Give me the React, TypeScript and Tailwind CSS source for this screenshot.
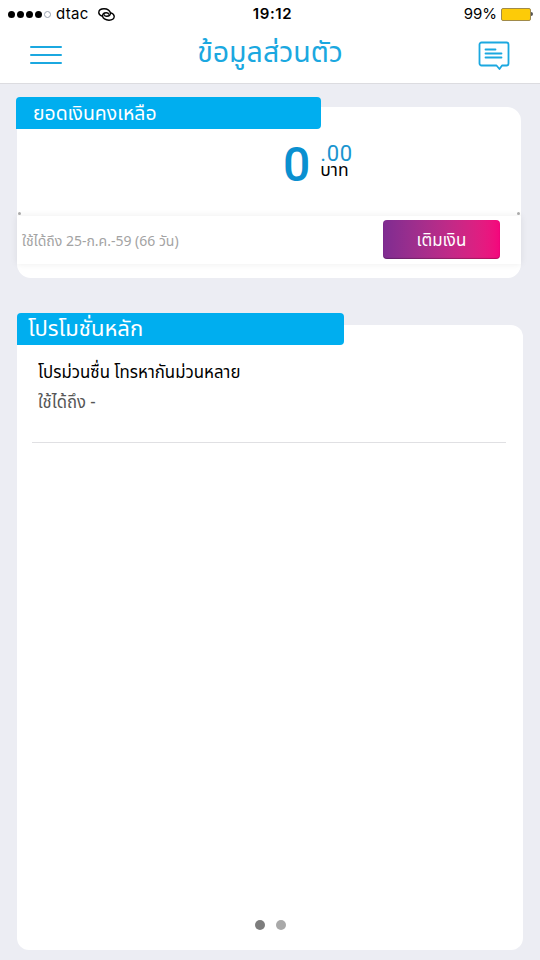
import React from "react";

const dots = [1, 2, 3, 4];

const StatusBar = () => {
  return (
    <div className="flex h-7 items-center justify-between pl-2 pr-[7px] text-[15px] text-black font-['Inter','Roboto',sans-serif]">
      <div className="flex w-[200px] items-center">
        <div className="flex items-center gap-[2px]">
          {dots.map((dot) => (
            <span key={dot} className="h-[7px] w-[7px] rounded-full bg-black" />
          ))}
          <span className="h-[7px] w-[7px] rounded-full border border-gray-400" />
        </div>
        <span className="ml-[5px] tracking-[0.3px]">dtac</span>
        {/* Hotspot */}
        <svg className="ml-[9px]" width="17" height="13" viewBox="0 0 17 13" fill="none" stroke="#000" strokeWidth="1.400" strokeLinecap="round">
          <path d="M4 8.200C1.800 7.400.7 5.800.8 4.200 1 2 3.200.8 6 .8c3.600 0 6.400 1.900 6.400 4.300 0 2-1.600 3.200-3.700 3.200-1.300 0-2.200-.5-2.300-1.300" />
          <path d="M13 4.800c2.200.8 3.300 2.400 3.200 4-.2 2.200-2.400 3.400-5.200 3.400-3.600 0-6.400-1.900-6.400-4.300 0-2 1.600-3.200 3.700-3.200 1.300 0 2.200.5 2.300 1.300" />
        </svg>
      </div>
      <span className="pl-1 font-semibold tracking-[0.600px]">19:12</span>
      <div className="flex w-[200px] items-center justify-end">
        <span>99%</span>
        <div className="ml-[4px] h-[13px] w-[30px] rounded-[2px] border border-[#a08a4a] bg-[#fdcb08]" />
        <span className="h-1 w-[2px] rounded-r bg-[#555]" />
      </div>
    </div>
  );
};

const Header = () => {
  return (
    <header className="h-[84px] border-b border-[#dcdce0] bg-white">
      <StatusBar />
      <nav className="flex h-[54px] items-center justify-between px-[30px]">
        <button aria-label="Menu" className="flex w-8 flex-col gap-[5.500px]">
          <span className="h-[2.500px] rounded-full bg-[#1ba8e0]" />
          <span className="h-[2.500px] rounded-full bg-[#1ba8e0]" />
          <span className="h-[2.500px] rounded-full bg-[#1ba8e0]" />
        </button>
        <h1 className="whitespace-nowrap pb-[3px] text-[28.500px] leading-8 text-[#1ba8e0]">ข้อมูลส่วนตัว</h1>
        <button aria-label="Messages" className="pt-[2px]">
          <svg width="32" height="30" viewBox="0 0 32 30" fill="none" stroke="#1ba8e0" strokeWidth="1.800" strokeLinecap="round" strokeLinejoin="round">
            <path d="M3.500 1.500h25a2 2 0 0 1 2 2v19a2 2 0 0 1-2 2h-4.500l-2.500 3.500-3-3.500H3.500a2 2 0 0 1-2-2v-19a2 2 0 0 1 2-2z" />
            <path d="M7.500 8.500h10M7.500 12.500h16M7.500 16.500h16" />
          </svg>
        </button>
      </nav>
    </header>
  );
};

const BalanceCard = () => {
  return (
    <section className="ml-[17px] mt-[23px] h-[171px] w-[504px] rounded-[14px] bg-white">
      <div className="flex flex-col">
        <div className="-ml-px -mt-[10px] flex h-8 w-[305px] items-center rounded rounded-bl-none bg-[#00aeef] pl-[17px] text-[20px] text-white">
          <h2 className="origin-left scale-x-[0.970] whitespace-nowrap pt-px">ยอดเงินคงเหลือ</h2>
        </div>
        <div className="flex h-[87px] pl-[266px] pt-[11px]">
          <span className="text-[48px] font-medium leading-[50px] text-[#0a90d0] font-['Roboto',sans-serif]">0</span>
          <div className="ml-[10px] flex flex-col pt-px">
            <span className="text-[22px] leading-[25px] tracking-[0.600px] text-[#1a95cf] font-['Roboto',sans-serif]">.00</span>
            <span className="text-[17.500px] leading-[10px] text-black">บาท</span>
          </div>
        </div>
      </div>
      <div className="-mt-[4px] flex justify-between px-px">
        <span className="h-[3px] w-[3px] rounded-full bg-[#aaa]" />
        <span className="h-[3px] w-[3px] rounded-full bg-[#aaa]" />
      </div>
      <div className="mt-px flex h-12 items-center justify-between pl-[5px] pr-[21px] shadow-[0_0_7px_rgba(0,0,0,0.08)]">
        <span className="whitespace-nowrap pt-[3px] text-[14px] text-[#a3a3a3]">ใช้ได้ถึง 25-ก.ค.-59 (66 วัน)</span>
        <button className="mb-[2px] flex h-[39px] w-[117px] items-center justify-center rounded-[4px] bg-gradient-to-r from-[#7f2c91] to-[#f5047c] text-[18px] text-white shadow-[inset_0_-1px_1px_rgba(0,0,0,0.25)]">
          <span className="scale-x-[0.940] pt-[3px]">เติมเงิน</span>
        </button>
      </div>
    </section>
  );
};

const PromotionCard = () => {
  return (
    <section className="ml-[17px] mt-[47px] flex h-[625px] w-[506px] flex-col rounded-[12px] bg-white">
      <div className="-mt-3 flex h-8 w-[327px] shrink-0 items-center rounded rounded-bl-none bg-[#00aeef] pl-[11px] text-white">
        <h2 className="whitespace-nowrap text-[22px]">โปรโมชั่นหลัก</h2>
      </div>
      <div className="ml-[15px] mr-[17px] flex h-[98px] flex-col border-b-[1.500px] border-[#e0e0e3] pl-[6px] pt-[13px]">
        <p className="origin-left scale-x-[0.935] whitespace-nowrap text-[18px] leading-[30px] text-black">โปรม่วนซื่น โทรหากันม่วนหลาย</p>
        <p className="origin-left scale-x-[0.950] whitespace-nowrap text-[17.500px] leading-[30px] text-[#555]">ใช้ได้ถึง -</p>
      </div>
      <div className="mb-5 mt-auto flex justify-center gap-[11px]">
        <span className="h-[10px] w-[10px] rounded-full bg-[#7d7d7d]" />
        <span className="h-[10px] w-[10px] rounded-full bg-[#a9a9a9]" />
      </div>
    </section>
  );
};

const App = () => {
  return (
    <div className="h-[960px] w-[540px] overflow-hidden bg-[#ecedf3] font-['Noto_Sans_Thai','Roboto',sans-serif]">
      <Header />
      <main className="flow-root">
        <BalanceCard />
        <PromotionCard />
      </main>
    </div>
  );
};

export default App;
